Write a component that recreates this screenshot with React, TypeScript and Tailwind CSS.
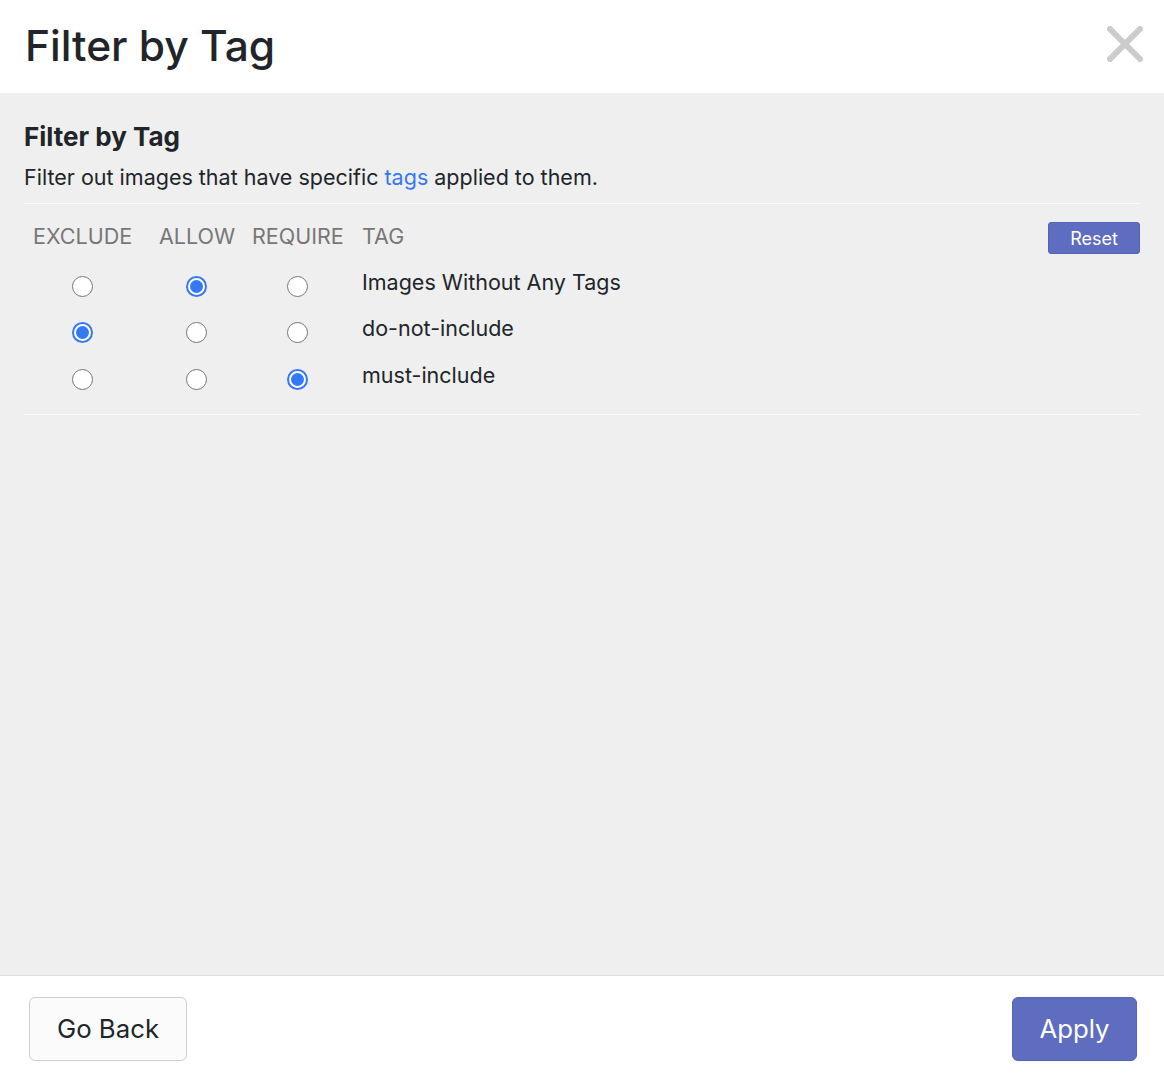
import { useState } from "react";

interface TagRow {
  name: string;
  mode: "exclude" | "allow" | "require";
}

const initialRows: TagRow[] = [
  { name: "Images Without Any Tags", mode: "allow" },
  { name: "do-not-include", mode: "exclude" },
  { name: "must-include", mode: "require" },
];

const Radio = ({ checked, onClick }: { checked: boolean; onClick: () => void }) => {
  if (checked) {
    return (
      <button
        onClick={onClick}
        className="w-[21px] h-[21px] rounded-full border-2 border-[#3478f6] bg-white flex items-center justify-center"
      >
        <span className="w-[13px] h-[13px] rounded-full bg-[#3478f6]" />
      </button>
    );
  }
  return (
    <button
      onClick={onClick}
      className="w-[21px] h-[21px] rounded-full border border-[#767676] bg-white"
    />
  );
};

const App = () => {
  const [rows, setRows] = useState<TagRow[]>(initialRows);

  const setMode = (i: number, mode: TagRow["mode"]) => {
    setRows(rows.map((r, j) => (j === i ? { ...r, mode } : r)));
  };

  return (
    <div
      className="h-screen flex flex-col bg-[#efefef] text-[#212529]"
      style={{ fontFamily: "Inter, 'Noto Sans', sans-serif" }}
    >
      {/* Header */}
      <div className="h-[93px] shrink-0 bg-white flex items-center justify-between pl-[25px] pr-[21px]">
        <h1 className="text-[42.5px] leading-none font-medium">Filter by Tag</h1>
        <button aria-label="Close" className="w-[36px] h-[36px] flex items-center justify-center -mt-[6px]">
          <svg width="36" height="36" viewBox="0 0 36 36">
            <path d="M3 3 L33 33 M33 3 L3 33" stroke="#cccccc" strokeWidth="6" strokeLinecap="square" />
          </svg>
        </button>
      </div>

      {/* Body */}
      <div className="flex-1 px-[24px] pt-[29px]">
        <h2 className="text-[26px] leading-[30px] font-bold">Filter by Tag</h2>
        <p className="text-[21.5px] leading-[28px] mt-[11px]">
          Filter out images that have specific <span className="text-[#3478f6]">tags</span> applied to them.
        </p>
        <div className="mt-[12px] border-t border-[#fafafa]" />

        <div className="grid grid-cols-[126px_93px_110px_1fr]">
          {/* head */}
          <div className="pl-[9px] h-[59px] pt-[5px] flex items-center text-[21.5px] text-[#777]">EXCLUDE</div>
          <div className="pl-[9px] h-[59px] pt-[5px] flex items-center text-[21.5px] text-[#777]">ALLOW</div>
          <div className="pl-[9px] h-[59px] pt-[5px] flex items-center text-[21.5px] text-[#777]">REQUIRE</div>
          <div className="pl-[9px] h-[59px] pt-[5px] flex items-center justify-between text-[21.5px] text-[#777]">
            <span>TAG</span>
            <button className="h-[32px] w-[92px] mt-[4px] rounded-[3px] bg-[#5f6dc0] border border-[#5563b8] text-white text-[18px]">
              Reset
            </button>
          </div>

          {rows.map((r, i) => (
            <div key={r.name} className="contents">
              <div className="pl-[9px] h-[46.5px] flex items-center">
                <div className="w-[99px] flex justify-center">
                  <Radio checked={r.mode === "exclude"} onClick={() => setMode(i, "exclude")} />
                </div>
              </div>
              <div className="pl-[9px] h-[46.5px] flex items-center">
                <div className="w-[75px] flex justify-center">
                  <Radio checked={r.mode === "allow"} onClick={() => setMode(i, "allow")} />
                </div>
              </div>
              <div className="pl-[9px] h-[46.5px] flex items-center">
                <div className="w-[91px] flex justify-center">
                  <Radio checked={r.mode === "require"} onClick={() => setMode(i, "require")} />
                </div>
              </div>
              <div className="pl-[9px] h-[46.5px] flex items-center text-[21.5px] pb-[9px]">{r.name}</div>
            </div>
          ))}
        </div>
        <div className="mt-[11px] border-t border-[#fafafa]" />
      </div>

      {/* Footer */}
      <div className="h-[107px] shrink-0 bg-white border-t border-[#dddddd] flex items-center justify-between pl-[29px] pr-[27px]">
        <button className="h-[64px] w-[158px] rounded-[6px] border border-[#c8cdd8] bg-[#fbfbfc] text-[25.75px]">
          Go Back
        </button>
        <button className="h-[64px] w-[125px] rounded-[6px] bg-[#5f6dc0] border border-[#5563b8] text-white text-[25.75px]">
          Apply
        </button>
      </div>
    </div>
  );
};

export default App;
